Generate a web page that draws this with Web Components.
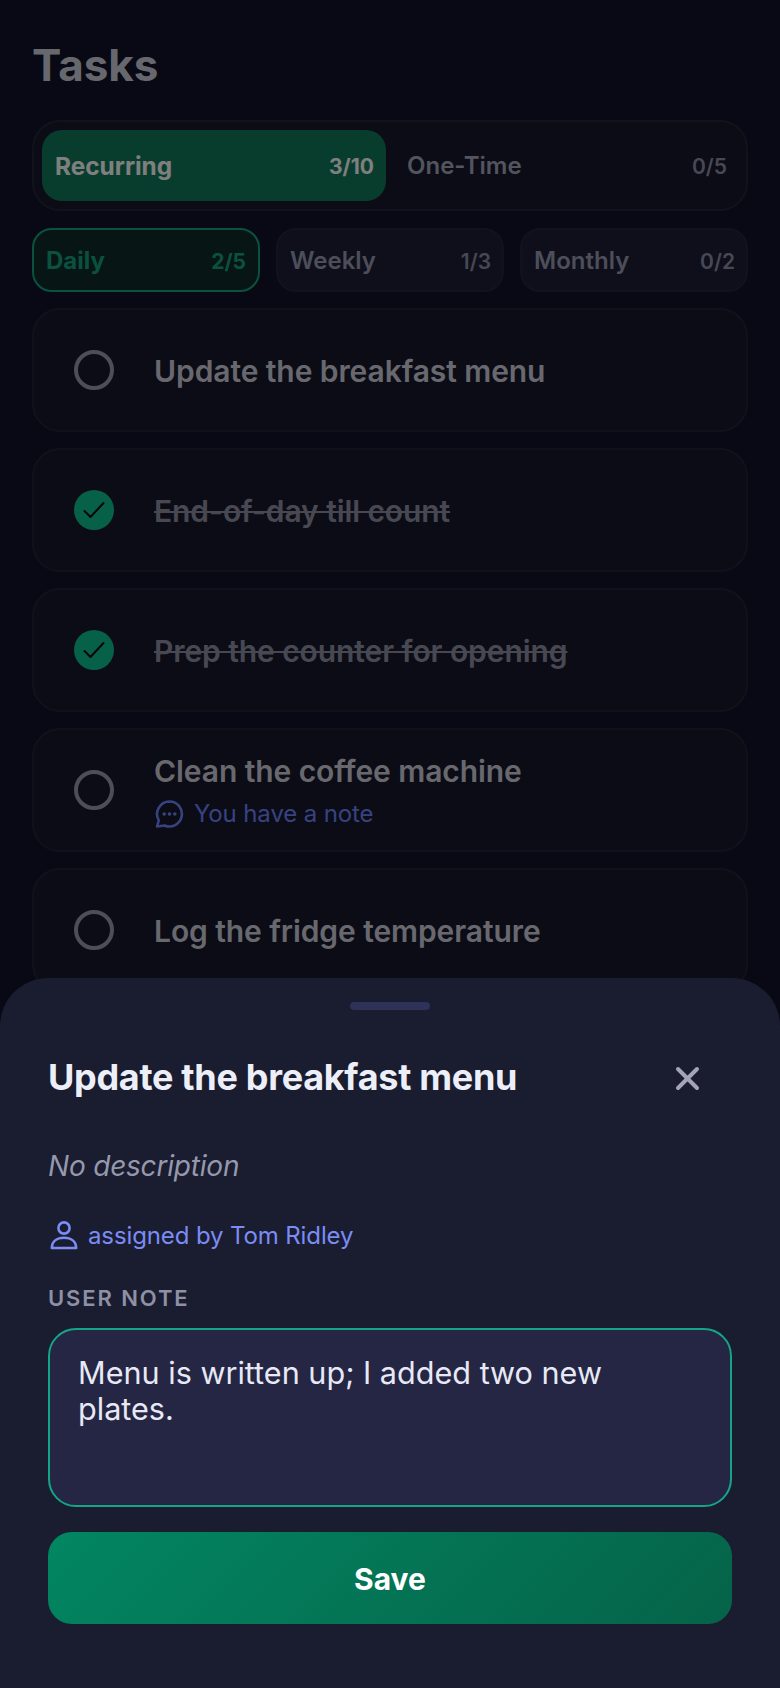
<!DOCTYPE html>
<html lang="en">
<head>
<meta charset="utf-8">
<title>Tasks</title>
<style>
  html, body { margin: 0; height: 100%; background: #101228; }
  body { font-family: Inter, "Liberation Sans", sans-serif; color: #e8e9f5; overflow: hidden; }
</style>
</head>
<body>
<task-screen>
  <seg-tabs>
    <seg-tab label="Recurring" count="3/10" active></seg-tab>
    <seg-tab label="One-Time" count="0/5"></seg-tab>
  </seg-tabs>
  <filter-tabs>
    <filter-tab label="Daily" count="2/5" active></filter-tab>
    <filter-tab label="Weekly" count="1/3"></filter-tab>
    <filter-tab label="Monthly" count="0/2"></filter-tab>
  </filter-tabs>
  <task-card>Update the breakfast menu</task-card>
  <task-card done>End-of-day till count</task-card>
  <task-card done>Prep the counter for opening</task-card>
  <task-card note="You have a note">Clean the coffee machine</task-card>
  <task-card>Log the fridge temperature</task-card>
</task-screen>
<task-sheet heading="Update the breakfast menu" assigner="Tom Ridley">Menu is written up; I added two new plates.</task-sheet>

<script>
class TaskScreen extends HTMLElement {
  constructor() {
    super();
    this.attachShadow({ mode: 'open' });
    this.shadowRoot.innerHTML = `
      <style>
        :host { display: block; padding: 0 32px; height: 1688px; box-sizing: border-box; overflow: hidden; }
        h1 { margin: 0; padding-top: 38px; height: 120px; box-sizing: border-box; font-size: 44px; line-height: 54px; font-weight: 700; color: #cfd0dc; }
        .list { display: flex; flex-direction: column; gap: 16px; }
      </style>
      <h1>Tasks</h1>
      <div class="list"><slot></slot></div>
    `;
  }
}

class SegTabs extends HTMLElement {
  constructor() {
    super();
    this.attachShadow({ mode: 'open' });
    this.shadowRoot.innerHTML = `
      <style>
        :host { display: grid; grid-template-columns: 1fr 1fr; gap: 8px; padding: 8px; height: 91px; box-sizing: border-box; background: #16182b; border: 2px solid #232538; border-radius: 28px; }
      </style>
      <slot></slot>
    `;
  }
}

class SegTab extends HTMLElement {
  constructor() {
    super();
    this.attachShadow({ mode: 'open' });
    const active = this.hasAttribute('active');
    this.shadowRoot.innerHTML = `
      <style>
        :host { display: flex; align-items: center; justify-content: space-between; padding: 0 ${active ? 12 : 11}px 0 13px; border-radius: 20px; background: ${active ? '#107a5c' : 'transparent'}; }
        .label { font-size: ${active ? 24.4 : 24}px; font-weight: ${active ? 700 : 600}; color: ${active ? '#ffffff' : '#a6a8bc'}; }
        .count { font-size: 21px; font-weight: ${active ? 700 : 600}; color: ${active ? '#ffffff' : '#8e90a6'}; position: relative; top: 1px; }
      </style>
      <span class="label">${this.getAttribute('label')}</span>
      <span class="count">${this.getAttribute('count')}</span>
    `;
  }
}

class FilterTabs extends HTMLElement {
  constructor() {
    super();
    this.attachShadow({ mode: 'open' });
    this.shadowRoot.innerHTML = `
      <style>
        :host { display: grid; grid-template-columns: repeat(3, 1fr); gap: 16px; margin-top: 1px; }
      </style>
      <slot></slot>
    `;
  }
}

class FilterTab extends HTMLElement {
  constructor() {
    super();
    this.attachShadow({ mode: 'open' });
    const active = this.hasAttribute('active');
    this.shadowRoot.innerHTML = `
      <style>
        :host { display: flex; align-items: center; justify-content: space-between; height: 64px; box-sizing: border-box; padding: 0 ${active ? 12 : 11}px 0 12px; border-radius: 20px; border: 2px solid ${active ? '#14a57e' : '#232538'}; background: ${active ? '#0f2a2a' : '#1c1f36'}; }
        .label { font-size: 24px; font-weight: ${active ? 700 : 600}; color: ${active ? '#14a57e' : '#9a9cb4'}; }
        .count { font-size: 21px; font-weight: ${active ? 700 : 600}; color: ${active ? '#14a57e' : '#8e90a6'}; position: relative; top: 1px; }
      </style>
      <span class="label">${this.getAttribute('label')}</span>
      <span class="count">${this.getAttribute('count')}</span>
    `;
  }
}

class TaskCard extends HTMLElement {
  constructor() {
    super();
    this.attachShadow({ mode: 'open' });
    const done = this.hasAttribute('done');
    const note = this.getAttribute('note');
    this.shadowRoot.innerHTML = `
      <style>
        :host { display: flex; align-items: center; gap: 40px; height: 124px; box-sizing: border-box; padding: 0 40px; background: #16182b; border: 2px solid #212336; border-radius: 28px; flex: none; }
        .check { width: 40px; height: 40px; flex: none; box-sizing: border-box; border-radius: 50%; border: 4px solid #9a9cae; display: flex; align-items: center; justify-content: center; }
        .check.done { background: #0fc090; border: none; }
        .body { min-width: 0; display: flex; flex-direction: column; gap: 8px; }
        .title { font-size: 30px; line-height: 38px; font-weight: 600; letter-spacing: -0.08px; color: #d0d1dc; position: relative; top: 1px; }
        .title.done { color: #8e90a2; text-decoration: line-through; text-decoration-thickness: 2px; }
        .note { display: flex; align-items: center; gap: 10px; font-size: 24px; line-height: 32px; letter-spacing: -0.12px; color: #7085ff; position: relative; top: 1px; }
      </style>
      <div class="check ${done ? 'done' : ''}">
        ${done ? `<svg width="24" height="24" viewBox="0 0 24 24" fill="none" stroke="#0a0c16" stroke-width="2" stroke-linecap="round" stroke-linejoin="round"><path d="M2.5 13 8.5 19 21.5 5"/></svg>` : ''}
      </div>
      <div class="body">
        <div class="title ${done ? 'done' : ''}"><slot></slot></div>
        ${note ? `<div class="note">
          <svg width="30" height="30" viewBox="0 0 30 30" fill="none" stroke="#7085ff" stroke-width="2.6" stroke-linejoin="round"><path d="M15.5 2.500a12.500 12.500 0 1 1-5 24L3 27.500l1.800-6.200A12.500 12.500 0 0 1 15.500 2.500z"/><g fill="#7085ff" stroke="none"><circle cx="10.200" cy="15" r="1.800"/><circle cx="15.500" cy="15" r="1.800"/><circle cx="20.800" cy="15" r="1.800"/></g></svg>
          <span>${note}</span>
        </div>` : ''}
      </div>
    `;
  }
}

class TaskSheet extends HTMLElement {
  constructor() {
    super();
    this.attachShadow({ mode: 'open' });
    this.shadowRoot.innerHTML = `
      <style>
        :host { position: fixed; inset: 0; display: flex; flex-direction: column; justify-content: flex-end; background: rgba(0, 0, 0, 0.5); backdrop-filter: blur(0.6px); }
        .sheet { background: #1a1c2f; border-radius: 48px 48px 0 0; padding: 24px 48px 64px; display: flex; flex-direction: column; }
        .handle { width: 80px; height: 8px; border-radius: 4px; background: #2e3158; align-self: center; }
        .head { display: flex; align-items: center; justify-content: space-between; margin-top: 46px; height: 44px; }
        h2 { margin: 0; font-size: 36px; line-height: 44px; font-weight: 700; letter-spacing: -0.3px; color: #eceef8; position: relative; top: -1px; }
        .close { margin-right: 32px; display: flex; }
        .desc { margin-top: 46px; font-size: 28px; line-height: 40px; font-style: italic; letter-spacing: -0.2px; color: #9698ad; }
        .assigned { margin-top: 33px; height: 32px; display: flex; align-items: center; gap: 10px; font-size: 24px; line-height: 32px; letter-spacing: -0.12px; color: #7b8cf5; }
        .assigned span { position: relative; top: 1px; }
        .label { margin-top: 34px; font-size: 22px; line-height: 26px; font-weight: 600; letter-spacing: 1.9px; color: #8e90a6; }
        .input { margin-top: 17px; height: 179px; box-sizing: border-box; padding: 25px 60px 0 28px; border: 2px solid #14a587; border-radius: 28px; background: #242644; font-size: 30.6px; line-height: 36px; color: #e8e9f5; }
        .save { margin-top: 25px; height: 92px; padding-top: 2px; box-sizing: border-box; border-radius: 24px; background: linear-gradient(135deg, #028662 0%, #056348 100%); display: flex; align-items: center; justify-content: center; font-size: 30px; font-weight: 700; color: #ffffff; }
      </style>
      <div class="sheet">
        <div class="handle"></div>
        <div class="head">
          <h2>${this.getAttribute('heading')}</h2>
          <span class="close">
            <svg width="25" height="25" viewBox="0 0 25 25" fill="none" stroke="#a3a4b8" stroke-width="4" stroke-linecap="round"><path d="M3 3 22 22M22 3 3 22"/></svg>
          </span>
        </div>
        <div class="desc">No description</div>
        <div class="assigned">
          <svg width="30" height="30" viewBox="0 0 30 30" fill="none" stroke="#7b8cf5" stroke-width="2.6" stroke-linejoin="round"><circle cx="16" cy="8" r="5.6"/><path d="M3.800 28c0-6.500 5-10.200 12.200-10.200S28.200 21.500 28.200 28z"/></svg>
          <span>assigned by ${this.getAttribute('assigner')}</span>
        </div>
        <div class="label">USER NOTE</div>
        <div class="input"><slot></slot></div>
        <div class="save">Save</div>
      </div>
    `;
  }
}

customElements.define('task-screen', TaskScreen);
customElements.define('seg-tabs', SegTabs);
customElements.define('seg-tab', SegTab);
customElements.define('filter-tabs', FilterTabs);
customElements.define('filter-tab', FilterTab);
customElements.define('task-card', TaskCard);
customElements.define('task-sheet', TaskSheet);
</script>
</body>
</html>
